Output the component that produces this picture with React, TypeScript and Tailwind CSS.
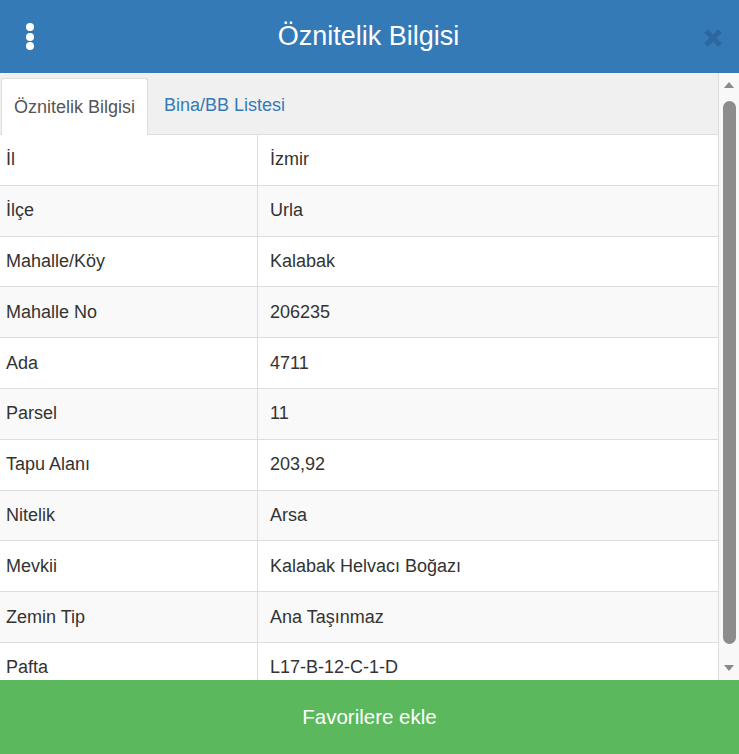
import React from "react";

const rows: [string, string][] = [
  ["İl", "İzmir"],
  ["İlçe", "Urla"],
  ["Mahalle/Köy", "Kalabak"],
  ["Mahalle No", "206235"],
  ["Ada", "4711"],
  ["Parsel", "11"],
  ["Tapu Alanı", "203,92"],
  ["Nitelik", "Arsa"],
  ["Mevkii", "Kalabak Helvacı Boğazı"],
  ["Zemin Tip", "Ana Taşınmaz"],
  ["Pafta", "L17-B-12-C-1-D"],
];

export default function App() {
  return (
    <div
      className="w-[739px] h-[754px] flex flex-col overflow-hidden bg-white text-[#333]"
      style={{ fontFamily: '"Liberation Sans", Arial, sans-serif' }}
    >
      {/* header */}
      <div className="h-[73px] shrink-0 bg-[#337ab7] flex items-center justify-between px-[26px]">
        <div className="flex flex-col items-center gap-[1.5px] w-2">
          <span className="block w-[8px] h-[8px] rounded-full bg-white" />
          <span className="block w-[8px] h-[8px] rounded-full bg-white" />
          <span className="block w-[8px] h-[8px] rounded-full bg-white" />
        </div>
        <h1 className="text-[27px] text-white font-normal leading-none">Öznitelik Bilgisi</h1>
        <svg width="20" height="20" viewBox="0 0 20 20" className="mr-[-10px] mt-[2px]">
          <path d="M3 3 L17 17 M17 3 L3 17" stroke="#2c679f" strokeWidth="5" strokeLinecap="butt" />
        </svg>
      </div>

      <div className="flex flex-1 min-h-0">
        {/* content */}
        <div className="flex-1 flex flex-col min-w-0 border-r border-[#ddd]">
          <div className="h-[62px] shrink-0 bg-[#f0f0f0] flex items-end pl-[1px] border-b border-[#ddd]">
            <div className="h-[57px] w-[147px] bg-white border border-[#ddd] border-b-0 rounded-t-[3px] flex items-center justify-center text-[18px] text-[#555] mb-[-1px]">
              Öznitelik Bilgisi
            </div>
            <div className="h-[57px] px-[16px] flex items-center text-[18px] text-[#337ab7]">Bina/BB Listesi</div>
          </div>
          <div className="flex-1 overflow-hidden">
            {rows.map(([k, v], i) => (
              <div
                key={k}
                className={`h-[50.8px] flex items-center text-[18px] border-b border-[#ddd] ${
                  i % 2 === 1 ? "bg-[#f9f9f9]" : "bg-white"
                }`}
              >
                <div className="w-[258px] h-full flex items-center pl-[6px] border-r border-[#ddd]">{k}</div>
                <div className="flex-1 pl-[12px]">{v}</div>
              </div>
            ))}
          </div>
        </div>

        {/* scrollbar */}
        <div className="w-[20px] shrink-0 bg-[#f8f8f8] flex flex-col items-center pt-[8px] pb-[8px]">
          <svg width="12" height="8" viewBox="0 0 12 8" className="shrink-0">
            <path d="M6 1 L11 7 L1 7 Z" fill="#8a8a8a" />
          </svg>
          <div className="w-[13px] flex-1 bg-[#8c8c8c] rounded-full mt-[12px] mb-[20px]" />
          <svg width="12" height="8" viewBox="0 0 12 8" className="shrink-0">
            <path d="M1 1 L11 1 L6 7 Z" fill="#8a8a8a" />
          </svg>
        </div>
      </div>

      {/* footer */}
      <div className="h-[74px] shrink-0 bg-[#5cb85c] flex items-center justify-center text-white text-[20.5px]">
        Favorilere ekle
      </div>
    </div>
  );
}
